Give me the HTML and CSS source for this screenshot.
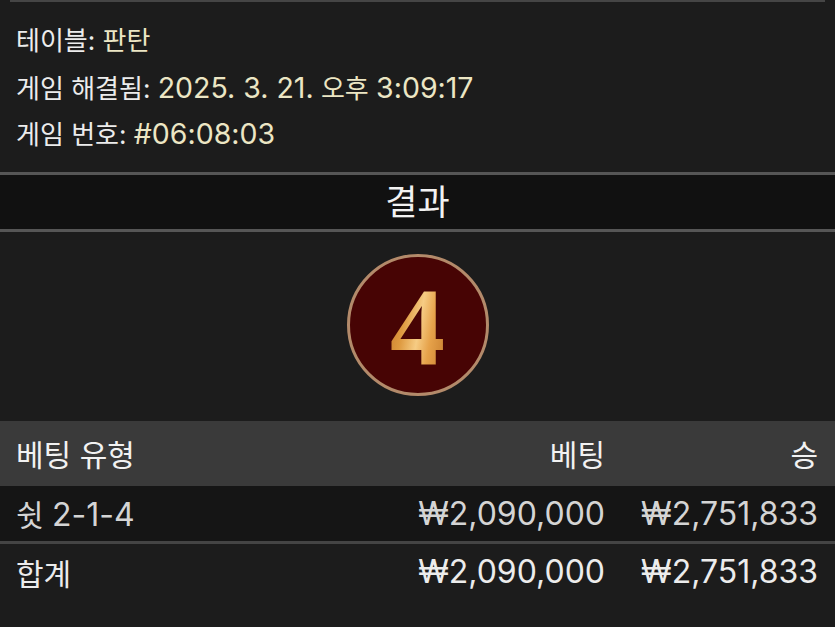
FILE: index.html
```html
<!DOCTYPE html>
<html lang="ko">
<head>
<meta charset="utf-8">
<link rel="stylesheet" href="styles.css">
</head>
<body>
<div class="page">
  <div class="top-rule"></div>
  <div class="info">
    <div class="info-line"><span class="label">테이블:</span> <span class="value">판탄</span></div>
    <div class="info-line"><span class="label">게임 해결됨:</span> <span class="value"><span class="num">2025. 3. 21.</span> 오후 <span class="num">3:09:17</span></span></div>
    <div class="info-line"><span class="label">게임 번호:</span> <span class="value num">#06:08:03</span></div>
  </div>
  <div class="section-head">결과</div>
  <div class="result">
    <div class="ball"><span class="ball-num">4</span></div>
  </div>
  <div class="table">
    <div class="row head">
      <div class="c-type">베팅 유형</div>
      <div class="c-bet">베팅</div>
      <div class="c-win">승</div>
    </div>
    <div class="row body">
      <div class="c-type">쉿 <span class="tnum">2-1-4</span></div>
      <div class="c-bet tnum">₩2,090,000</div>
      <div class="c-win tnum">₩2,751,833</div>
    </div>
    <div class="row total">
      <div class="c-type">합계</div>
      <div class="c-bet tnum">₩2,090,000</div>
      <div class="c-win tnum">₩2,751,833</div>
    </div>
  </div>
</div>
</body>
</html>
```

FILE: styles.css
```css
html, body {
  margin: 0;
  padding: 0;
  background: #1c1c1c;
}
body {
  font-family: "Inter", "Noto Sans CJK KR", sans-serif;
  color: #ececec;
  width: 835px;
  height: 627px;
  overflow: hidden;
}
.top-rule {
  height: 2px;
  margin: 0 10px;
  background: #454545;
}
.info {
  padding: 16px 16px 14px;
}
.info-line {
  font-size: 26px;
  line-height: 46.5px;
  height: 46.5px;
  white-space: nowrap;
}
.num {
  font-size: 28.5px;
}
.label { color: #ececec; }
.value { color: #ece6c4; }
.section-head {
  border-top: 3px solid #565656;
  border-bottom: 3px solid #565656;
  background: #111111;
  height: 54px;
  line-height: 54px;
  text-align: center;
  font-size: 35px;
  color: #f2f2f2;
}
.result {
  display: flex;
  justify-content: center;
  padding: 22px 0 25px;
}
.ball {
  width: 136px;
  height: 136px;
  border-radius: 50%;
  border: 3px solid #b38a6a;
  background: #470404;
  display: flex;
  align-items: center;
  justify-content: center;
}
.ball-num {
  font-family: "Liberation Serif", serif;
  font-weight: bold;
  font-size: 110px;
  line-height: 1;
  margin-top: 4px;
  background: linear-gradient(100deg, #c27426 0%, #de9a40 30%, #f6cc84 52%, #e6a24a 70%, #c47a2c 100%);
  -webkit-background-clip: text;
  background-clip: text;
  color: transparent;
}
.row {
  display: grid;
  grid-template-columns: 1fr 200px 213px;
  align-items: center;
  padding: 0 17px 0 16px;
  font-size: 30px;
  white-space: nowrap;
}
.tnum {
  font-size: 32px;
}
.row.head {
  background: #3a3a3a;
  height: 65px;
  color: #f2f2f2;
}
.row.body {
  background: #151515;
  height: 55px;
  border-bottom: 3px solid #444444;
  color: #d4d4d4;
}
.row.total {
  height: 56px;
  color: #ececec;
}
.c-bet, .c-win { text-align: right; }
```
